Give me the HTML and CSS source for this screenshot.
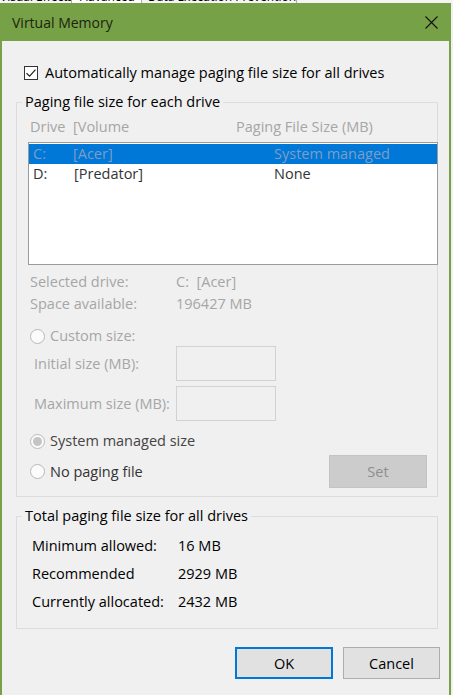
FILE: index.html
```html
<!DOCTYPE html>
<html>
<head>
<meta charset="utf-8">
<title>Virtual Memory</title>
<link rel="stylesheet" href="styles.css">
</head>
<body>
<div class="backdrop">
  <div class="tabs">
    <span class="tab t1">Visual Effects</span>
    <span class="tab t2">Advanced</span>
    <span class="tab t3">Data Execution Prevention</span>
  </div>
</div>
<div class="dialog">
  <div class="titlebar">
    <span class="title">Virtual Memory</span>
    <svg class="close" width="13" height="13" viewBox="0 0 13 13"><path d="M0.5 0.5 L12.5 12.5 M12.5 0.5 L0.5 12.5" stroke="#111" stroke-width="1.1" fill="none"/></svg>
  </div>
  <div class="content">
    <div class="check-row">
      <span class="checkbox"><svg width="14" height="14" viewBox="0 0 14 14"><path d="M2.5 7.2 L5.6 10.2 L11.5 3.6" stroke="#222" stroke-width="1.2" fill="none"/></svg></span>
      <span>Automatically manage paging file size for all drives</span>
    </div>

    <fieldset class="group g1">
      <legend>Paging file size for each drive</legend>
      <div class="head-row disabled">
        <span class="hc1">Drive</span><span class="hc2">[Volume</span><span class="hc3">Paging File Size (MB)</span>
      </div>
      <div class="listbox">
        <div class="lrow selected"><span class="lc1">C:</span><span class="lc2">[Acer]</span><span class="lc3">System managed</span></div>
        <div class="lrow"><span class="lc1">D:</span><span class="lc2 pred">[Predator]</span><span class="lc3">None</span></div>
      </div>
      <div class="info disabled">
        <div class="irow"><span class="ilabel">Selected drive:</span><span>C:&nbsp; [Acer]</span></div>
        <div class="irow"><span class="ilabel">Space available:</span><span>196427 MB</span></div>
      </div>
      <div class="radio-row custom disabled">
        <span class="radio"></span><span>Custom size:</span>
      </div>
      <div class="size-row first disabled">
        <span class="slabel">Initial size (MB):</span><span class="textbox"></span>
      </div>
      <div class="size-row disabled">
        <span class="slabel">Maximum size (MB):</span><span class="textbox"></span>
      </div>
      <div class="radio-row sysman">
        <span class="radio checked"></span><span>System managed size</span>
      </div>
      <div class="last-row">
        <div class="radio-row nopage">
          <span class="radio"></span><span>No paging file</span>
        </div>
        <span class="btn set">Set</span>
      </div>
    </fieldset>

    <fieldset class="group g2">
      <legend>Total paging file size for all drives</legend>
      <div class="totals">
        <div class="trow"><span class="tlabel">Minimum allowed:</span><span>16 MB</span></div>
        <div class="trow"><span class="tlabel">Recommended</span><span>2929 MB</span></div>
        <div class="trow"><span class="tlabel">Currently allocated:</span><span>2432 MB</span></div>
      </div>
    </fieldset>

    <div class="buttons">
      <span class="btn ok">OK</span>
      <span class="btn cancel">Cancel</span>
    </div>
  </div>
</div>
</body>
</html>
```

FILE: styles.css
```css
html, body {
  margin: 0;
  padding: 0;
}
body {
  width: 453px;
  height: 695px;
  overflow: hidden;
  background: #f0f0f0;
  font-family: "Open Sans", "Noto Sans", "DejaVu Sans", sans-serif;
  font-size: 14.5px;
  color: #000;
}

/* parent window peeking above */
.backdrop {
  height: 3px;
  overflow: hidden;
  background: #f4f4f4;
}
.tabs {
  display: flex;
  margin-top: -11px;
  margin-left: -6px;
  line-height: 16px;
  font-size: 12px;
  color: #000;
}
.tab {
  box-sizing: border-box;
  padding-left: 6px;
  border-right: 1px solid #adadad;
  white-space: nowrap;
  overflow: hidden;
}
.t1 { width: 78px; }
.t2 { width: 70px; background: #fff; padding-left: 8px; }
.t3 { width: 155px; }

/* dialog */
.dialog {
  box-sizing: border-box;
  width: 451px;
  height: 692px;
  background: #f0f0f0;
  border-left: 2px solid #77a146;
  border-right: 2px solid #77a146;
}
.titlebar {
  height: 38px;
  background: #77a146;
  display: flex;
  align-items: center;
  justify-content: space-between;
  padding: 0 11px 0 10px;
}
.title {
  font-size: 14px;
  color: #1a2410;
}
.close { display: block; }

.content {
  display: flex;
  flex-direction: column;
}

.check-row {
  margin-top: 22px;
  height: 20px;
  padding-left: 22px;
  display: flex;
  align-items: center;
  gap: 7px;
  line-height: 20px;
}
.checkbox {
  box-sizing: border-box;
  width: 14px;
  height: 14px;
  border: 1px solid #333;
  background: #fff;
  display: flex;
  align-items: center;
  justify-content: center;
}
.checkbox svg { display: block; margin: -1px; }

.group {
  box-sizing: border-box;
  margin: 0 0 0 14px;
  width: 422px;
  min-width: 0;
  padding: 0;
  border: 1px solid #dcdcdc;
}
.group legend {
  padding: 0 3px;
  margin-left: 5px;
  line-height: 20px;
  color: #000;
}
.g1 {
  margin-top: 9px;
  padding-bottom: 8px;
}
.disabled { color: #a6a6a6; }

.head-row {
  margin-top: 5px;
  padding-left: 13px;
  line-height: 20px;
  display: flex;
  white-space: nowrap;
}
.hc1 { width: 43px; }
.hc2 { width: 163px; }

.listbox {
  box-sizing: border-box;
  margin: 5px 0 0 11px;
  width: 410px;
  height: 123px;
  border: 1px solid #9b9b9b;
  background: #fff;
  padding-top: 1px;
}
.lrow {
  height: 20px;
  line-height: 20px;
  display: flex;
  padding-left: 4px;
  white-space: nowrap;
  color: #333;
}
.lrow.selected {
  background: #0078d7;
  color: #7f9dc4;
}
.lc1 { width: 40px; }
.lc2 { width: 201px; }
.pred { margin-left: 1px; width: 200px; }

.info {
  margin-top: 6px;
  padding-left: 13px;
}
.irow {
  display: flex;
  line-height: 22px;
  white-space: nowrap;
}
.ilabel { width: 146px; }

.radio-row {
  display: flex;
  align-items: center;
  gap: 5px;
  height: 20px;
  line-height: 20px;
  padding-left: 13px;
  white-space: nowrap;
}
.radio {
  box-sizing: border-box;
  width: 15px;
  height: 15px;
  border: 1px solid #b9b9b9;
  border-radius: 50%;
  background: #fbfbfb;
  display: flex;
  align-items: center;
  justify-content: center;
}
.radio.checked::after {
  content: "";
  width: 9px;
  height: 9px;
  border-radius: 50%;
  background: #c4c4c4;
}
.custom { margin-top: 11px; }

.size-row {
  display: flex;
  align-items: center;
  padding-left: 17px;
  white-space: nowrap;
}
.size-row + .size-row { margin-top: 5px; }
.slabel { width: 142px; }
.textbox {
  box-sizing: border-box;
  width: 100px;
  height: 35px;
  border: 1px solid #d2d2d2;
  background: #f0f0f0;
}

.sysman {
  margin-top: 10px;
  color: #000;
}
.sysman span + span { color: #444; }

.last-row {
  margin-top: 4px;
  display: flex;
  align-items: center;
  justify-content: space-between;
  padding-right: 10px;
}
.nopage { color: #333; }

.btn {
  box-sizing: border-box;
  width: 98px;
  display: flex;
  align-items: center;
  justify-content: center;
}
.set {
  height: 33px;
  background: #cccccc;
  border: 1px solid #c4c4c4;
  color: #8f8f8f;
}

.g2 {
  margin-top: 9px;
  padding-bottom: 12px;
}
.totals {
  margin-top: 6px;
  padding-left: 15px;
}
.trow {
  display: flex;
  line-height: 28px;
  white-space: nowrap;
}
.tlabel { width: 146px; }

.buttons {
  margin-top: 18px;
  display: flex;
  justify-content: flex-end;
  gap: 10px;
  padding-right: 9px;
}
.ok, .cancel {
  height: 32px;
  background: #e1e1e1;
}
.ok {
  width: 98px;
  border: 2px solid #0078d7;
}
.cancel {
  width: 97px;
  border: 1px solid #adadad;
}
```
